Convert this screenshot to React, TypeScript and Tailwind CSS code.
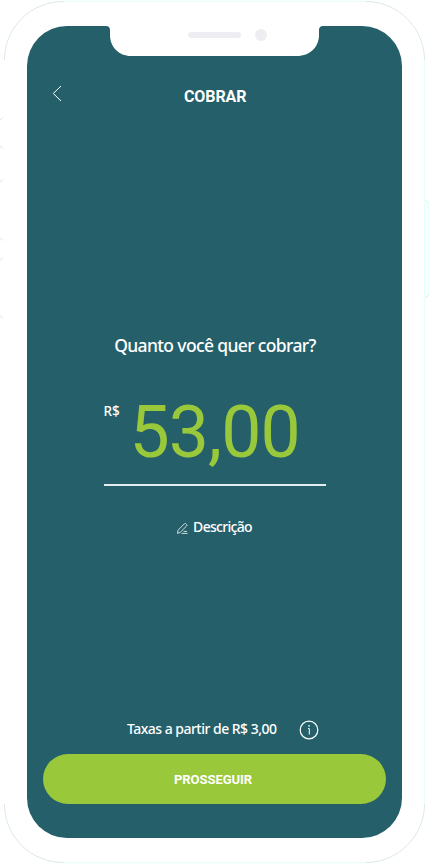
import React from 'react';

const PhoneOutline: React.FC = () => (
  <svg className="absolute inset-0 pointer-events-none" width="430" height="864" viewBox="0 0 430 864" fill="none">
    {/* Straight edges */}
    <path d="M64 1.5H366M424.500 60V804M366 862.5H64" stroke="#e6fffb" />
    {/* Corners */}
    <path
      d="M4.5 60C4.5 28 30 1.5 64 1.5M366 1.5C398 1.5 424.500 28 424.500 60M424.500 804C424.500 836 398 862.500 366 862.500M64 862.500C30 862.500 4.500 836 4.500 804"
      stroke="#cfe3df"
      strokeWidth="0.8"
    />
    {/* Side buttons */}
    <path
      d="M3 117.500L0 120M0 146L3 148.500M3 179.500L0 182M0 238L3 240.500M3 257.500L0 260M0 316L3 318.500M425.500 200.500L428.500 203M428.500 295L425.500 297.500"
      stroke="#c6e3dc"
      strokeWidth="0.8"
    />
    <path d="M428.500 203V295" stroke="#e6fffb" />
  </svg>
);

const Notch: React.FC = () => (
  <svg className="absolute top-0 left-[78px]" width="218" height="30" viewBox="0 0 218 30">
    <path
      d="M0 0H1C3.500 0 5 1.500 5 4V9C5 21 14 30 26 30H192C205 30 214 21 214 9V4C214 1.500 215.500 0 218 0Z"
      fill="#ffffff"
    />
    <rect x="83" y="6" width="53" height="6" rx="3" fill="#eeedf2" />
    <circle cx="156" cy="9" r="6" fill="#eeedf2" />
  </svg>
);

const PencilIcon: React.FC = () => (
  <svg className="mt-0.5" width="11" height="11" viewBox="0 0 11 11" fill="none" stroke="#ffffff" strokeWidth="0.8" strokeLinejoin="round">
    <path d="M0.600 10.400L1 7.200L7.300 0.900C7.900 0.400 8.500 0.400 9 0.900L9.500 1.400C10 2 10 2.500 9.500 3.100L3.200 9.400L0.600 10.400Z" />
    <path d="M6.500 8.400H10M4.500 10.400H10.500" />
  </svg>
);

export default function App() {
  return (
    <div className="relative w-[430px] h-[864px] overflow-hidden bg-white pt-[26px] pl-[27px] font-['Roboto',sans-serif] text-white whitespace-nowrap">
      <PhoneOutline />

      <main className="relative flex flex-col w-[375px] h-[812px] rounded-[40px] bg-[#245f6a] overflow-hidden">
        <Notch />

        <header className="flex items-center h-6 mt-[57px] px-[25px]">
          <button type="button" aria-label="Voltar" className="-mt-1">
            <svg width="10" height="18" viewBox="0 0 10 18" fill="none" stroke="#ffffff">
              <path d="M9 2L1.300 9.500L9 17" />
            </svg>
          </button>
          <h1 className="ml-[122px] mt-1 text-base leading-6 font-bold tracking-[-0.1px]">COBRAR</h1>
        </header>

        <section className="flex flex-col items-center mt-[226px]">
          <h2 className="pl-px font-['Noto_Sans',sans-serif] text-[17.500px] leading-6 font-medium tracking-[-0.64px]">Quanto você quer cobrar?</h2>

          <div className="flex items-start w-[222px] h-24 mt-[33px] border-b-2 border-[#e3ecee]">
            <span className="w-[26px] mt-[11px] font-['Noto_Sans',sans-serif] text-[13.500px] leading-5 font-medium">R$</span>
            <span className="pt-px text-[71.500px] leading-[84px] tracking-[-0.9px] text-[#99c93a]">53,00</span>
          </div>

          <button type="button" className="flex items-center gap-[5px] mt-[31px] h-5">
            <PencilIcon />
            <span className="font-['Noto_Sans',sans-serif] text-sm leading-5 font-medium tracking-[-0.7px]">Descrição</span>
          </button>
        </section>

        <footer className="mt-auto mb-[34px] px-4">
          <div className="flex items-center h-5 mb-[14px] pl-[84px]">
            <span className="w-[171.500px] -mt-0.5 font-['Noto_Sans',sans-serif] text-sm leading-5 font-medium tracking-[-0.52px]">Taxas a partir de R$ 3,00</span>
            <svg width="20" height="20" viewBox="0 0 20 20" fill="none" stroke="#ffffff">
              <circle cx="10" cy="10" r="8.800" strokeWidth="1.200" />
              <path d="M9 8.500H10.300V14.500" />
              <circle cx="10" cy="5.900" r="0.800" fill="#ffffff" stroke="none" />
            </svg>
          </div>
          <button type="button" className="w-full h-[50px] pt-0.5 rounded-full bg-[#99c93a] text-[13px] font-bold">
            <span className="mr-[3px] tracking-[-0.05px]">PROSSEGUIR</span>
          </button>
        </footer>
      </main>
    </div>
  );
}
